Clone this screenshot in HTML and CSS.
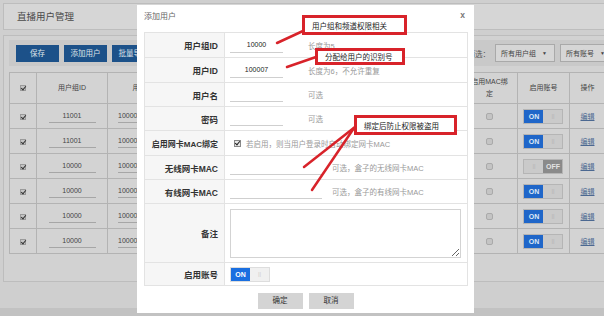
FILE: index.html
```html
<!DOCTYPE html>
<html lang="zh">
<head>
<meta charset="utf-8">
<title>直播用户管理</title>
<link rel="stylesheet" href="styles.css">
</head>
<body>
<div class="page">
  <div class="titlebar">直播用户管理</div>
  <div class="panel">
    <div class="toolbar">
      <span class="btn">保存</span>
      <span class="btn">添加用户</span>
      <span class="btn">批量导入</span>
      <div class="filter">筛选：<span class="sel">所有用户组 <i>▼</i></span><span class="sel sel2">所有账号 <i>▼</i></span></div>
    </div>
    <table class="grid">
      <colgroup>
        <col class="c-chk"><col class="c-gid"><col class="c-mid"><col class="c-mid"><col class="c-mid"><col class="c-mid"><col class="c-mid"><col class="c-mac"><col class="c-en"><col class="c-op">
      </colgroup>
      <thead>
        <tr><th><span class="tick"></span></th><th>用户组ID</th><th>用户ID</th><th>用户名</th><th>密码</th><th>无线MAC</th><th>有线MAC</th><th class="wrap">启用MAC绑<br>定</th><th>启用账号</th><th>操作</th></tr>
      </thead>
      <tbody>
        <tr><td><span class="tick"></span></td><td><span class="val">11001</span></td><td class="left"><span class="val">100001</span></td><td></td><td></td><td></td><td></td><td><span class="box"></span></td><td><span class="sw on"><b>ON</b><em>||</em></span></td><td><a>编辑</a></td></tr>
        <tr><td><span class="tick"></span></td><td><span class="val">11001</span></td><td class="left"><span class="val">100002</span></td><td></td><td></td><td></td><td></td><td><span class="box"></span></td><td><span class="sw on"><b>ON</b><em>||</em></span></td><td><a>编辑</a></td></tr>
        <tr><td><span class="tick"></span></td><td><span class="val">10000</span></td><td class="left"><span class="val">100003</span></td><td></td><td></td><td></td><td></td><td><span class="box"></span></td><td><span class="sw off"><em>||</em><b>OFF</b></span></td><td><a>编辑</a></td></tr>
        <tr><td><span class="tick"></span></td><td><span class="val">10000</span></td><td class="left"><span class="val">100004</span></td><td></td><td></td><td></td><td></td><td><span class="box"></span></td><td><span class="sw on"><b>ON</b><em>||</em></span></td><td><a>编辑</a></td></tr>
        <tr><td><span class="tick"></span></td><td><span class="val">10000</span></td><td class="left"><span class="val">100005</span></td><td></td><td></td><td></td><td></td><td><span class="box"></span></td><td><span class="sw on"><b>ON</b><em>||</em></span></td><td><a>编辑</a></td></tr>
        <tr><td><span class="tick"></span></td><td><span class="val">10000</span></td><td class="left"><span class="val">100006</span></td><td></td><td></td><td></td><td></td><td><span class="box"></span></td><td><span class="sw on"><b>ON</b><em>||</em></span></td><td><a>编辑</a></td></tr>
      </tbody>
    </table>
  </div>
  <div class="strip"></div>
</div>

<div class="modal">
  <div class="m-head"><span>添加用户</span><span class="close">x</span></div>
  <table class="form">
    <tr class="r25"><th>用户组ID</th><td><span class="inp">10000</span><span class="hint">长度为5</span></td></tr>
    <tr class="r25"><th>用户ID</th><td><span class="inp">100007</span><span class="hint">长度为6，不允许重复</span></td></tr>
    <tr class="r24"><th>用户名</th><td><span class="inp"></span><span class="hint">可选</span></td></tr>
    <tr class="r24"><th>密码</th><td><span class="inp"></span><span class="hint">可选</span></td></tr>
    <tr class="r25"><th class="long">启用网卡MAC绑定</th><td><span class="chk"></span><span class="hint tight">若启用，则当用户登录时自动绑定网卡MAC</span></td></tr>
    <tr class="r24"><th>无线网卡MAC</th><td><span class="inp wide"></span><span class="hint near">可选，盒子的无线网卡MAC</span></td></tr>
    <tr class="r24"><th>有线网卡MAC</th><td><span class="inp wide"></span><span class="hint near">可选，盒子的有线网卡MAC</span></td></tr>
    <tr class="r59"><th>备注</th><td><textarea class="memo"></textarea></td></tr>
    <tr class="r23"><th>启用账号</th><td><span class="msw"><b>ON</b><em>||</em></span></td></tr>
  </table>
  <div class="m-foot"><span class="mbtn">确定</span><span class="mbtn">取消</span></div>
</div>

<div class="note n1">用户组和频道权限相关</div>
<div class="note n2">分配给用户的识别号</div>
<div class="note n3">绑定后防止权限被盗用</div>
<svg class="arrows" width="604" height="316" viewBox="0 0 604 316">
  <g stroke="#d8232a" stroke-width="2.5" stroke-linecap="round">
    <line x1="277" y1="43" x2="303" y2="31"/>
    <line x1="287" y1="67" x2="316" y2="57"/>
    <line x1="355" y1="127" x2="304" y2="167"/>
    <line x1="354" y1="128" x2="312" y2="190"/>
  </g>
</svg>
</body>
</html>
```
FILE: styles.css
```css
* { box-sizing: border-box; }
html, body { margin: 0; padding: 0; }
body {
  width: 604px; height: 316px; overflow: hidden; position: relative;
  background: #cfcfcf;
  font-family: "Liberation Sans", "Noto Sans CJK SC", sans-serif;
  color: #333;
}
.page { width: 640px; padding: 3px 0 0 3px; }
.titlebar {
  height: 27px; background: #d6d6d6; border: 1px solid #bdbdbd;
  padding-left: 13px; line-height: 25px; font-size: 9.5px; color: #4a4a4a;
}
.panel {
  margin-top: 5px; height: 247px; background: #d2d2d2; border: 1px solid #bdbdbd;
  padding: 4px 5px;
}
.toolbar {
  height: 26px; background: #c9c9c9; display: flex; align-items: center;
  padding-left: 7px; gap: 5px; width: 612px;
}
.btn {
  height: 17px; padding: 0 6px; background: #1c5189; color: #dfe3e8;
  font-size: 7.5px; line-height: 17px; min-width: 43px; text-align: center;
}
.filter {
  margin-left: auto; margin-right: 11px; display: flex; align-items: center; gap: 5px;
  font-size: 7.5px; color: #555;
}
.sel {
  height: 18px; border: 1px solid #a9a9a9; background: #d6d6d6; width: 60px;
  line-height: 16px; padding-left: 5px; font-size: 7px; color: #444;
}
.sel i { font-style: normal; font-size: 5px; margin-left: 4px; vertical-align: 1px; }
.sel2 { width: 50px; }
.grid {
  margin-top: 6px; border-collapse: collapse; table-layout: fixed; width: 596px;
  font-size: 7px; color: #444;
}
.grid th, .grid td { border: 1px solid #b3b3b3; text-align: center; padding: 0; background: #d3d3d3; }
.grid th { height: 31px; font-weight: normal; line-height: 10px; }
.grid th.wrap { line-height: 12px; }
.grid td { height: 25px; }
.grid td.left { text-align: left; padding-left: 10px; }
.grid td.left .val { text-align: left; }
.c-chk { width: 27px; } .c-gid { width: 71px; } .c-mid { width: 70.8px; }
.c-mac { width: 56px; } .c-en { width: 52px; } .c-op { width: 36px; }
.tick {
  display: inline-block; width: 6px; height: 6px; border: 1px solid #9a9a9a; background: #c4c4c4;
  position: relative; vertical-align: middle;
}
.tick::after {
  content: ""; position: absolute; left: 1px; top: -1px; width: 2px; height: 4px;
  border: solid #333; border-width: 0 1px 1px 0; transform: rotate(40deg);
}
.val {
  display: inline-block; width: 47px; border-bottom: 1px solid #a6a6a6; font-size: 7px;
  line-height: 12px; color: #444;
}
.box {
  display: inline-block; width: 7px; height: 7px; border: 1px solid #aaa; border-radius: 2px;
  background: #c4c4c4; vertical-align: middle;
}
.sw {
  display: inline-flex; width: 40px; height: 15px; border: 1px solid #b5b5b5; vertical-align: middle;
  font-size: 7px; font-weight: bold;
}
.sw b, .sw em { flex: 1; display: flex; align-items: center; justify-content: center; font-style: normal; }
.sw.on b { background: #1f66c9; color: #dfe8f5; }
.sw em { background: #cacaca; color: #b3b3b3; font-weight: normal; font-size: 6px; }
.sw.off b { background: #8a8a8a; color: #e3e3e3; }
.grid a { color: #4b6891; text-decoration: underline; font-size: 7px; }
.strip { margin-top: 26px; margin-left: -3px; height: 10px; background: #c2c2c2; }

.modal {
  position: absolute; left: 137px; top: 5px; width: 337px; height: 308px;
  background: #fff; padding: 0 6px 0 7px;
}
.m-head {
  height: 20px; display: flex; justify-content: space-between; align-items: center;
  font-size: 8px; color: #666; padding: 0 3px 0 0;
}
.m-head .close { font-weight: bold; color: #777; font-size: 8.5px; }
.form {
  margin-top: 7px; width: 324px; border-collapse: collapse; font-size: 8px;
}
.form th, .form td { border: 1px solid #e3e3e3; padding: 0; }
.form th {
  width: 80px; background: #f6f6f6; text-align: right; padding-right: 6px;
  font-size: 8.5px; color: #333; font-weight: bold; white-space: nowrap;
}
.form th.long { font-size: 8px; }
.form td { padding-left: 5px; white-space: nowrap; }
.r25 { height: 25px; } .r24 { height: 24px; } .r23 { height: 23px; } .r59 { height: 59px; }
.inp {
  display: inline-block; width: 53px; height: 15px; border-bottom: 1px solid #cfcfcf;
  text-align: center; font-size: 7px; line-height: 14px; color: #222; vertical-align: middle;
}
.inp.wide { width: 92px; }
.hint { display: inline-block; margin-left: 25px; font-size: 7.5px; color: #999; vertical-align: middle; }
.hint.near { margin-left: 10px; }
.hint.tight { margin-left: 5px; }
.chk {
  display: inline-block; width: 7px; height: 7px; margin-left: 4px; border: 1px solid #888;
  background: #e8e8e8; position: relative; vertical-align: middle;
}
.chk::after {
  content: ""; position: absolute; left: 1px; top: -1px; width: 2px; height: 4px;
  border: solid #222; border-width: 0 1.2px 1.2px 0; transform: rotate(40deg);
}
.memo {
  display: block; width: 231px; height: 49px; margin: 0; border: 1px solid #d3d3d3;
  resize: both; font-family: inherit;
}
.msw {
  display: inline-flex; width: 40px; height: 15px; border: 1px solid #ddd; vertical-align: middle;
  font-size: 7px; font-weight: bold;
}
.msw b, .msw em { flex: 1; display: flex; align-items: center; justify-content: center; font-style: normal; }
.msw b { background: #1a6fe0; color: #fff; }
.msw em { background: #f0f0f0; color: #ccc; font-weight: normal; font-size: 6px; }
.m-foot { display: flex; justify-content: center; gap: 6px; margin-top: 7px; padding-right: 1px; }
.mbtn {
  width: 45px; height: 16px; background: #d4d4d4; font-size: 7.5px; color: #333;
  text-align: center; line-height: 16px;
}
.note {
  position: absolute; background: #fff; border: 3px solid #d8232a; font-size: 7.5px; color: #222;
  padding-left: 7px; white-space: nowrap; display: flex; align-items: center;
}
.n1 { left: 302px; top: 15px; width: 105px; height: 20px; }
.n2 { left: 315px; top: 48px; width: 90px; height: 17px; }
.n3 { left: 354px; top: 115px; width: 103px; height: 20px; }
.arrows { position: absolute; left: 0; top: 0; pointer-events: none; }
```
